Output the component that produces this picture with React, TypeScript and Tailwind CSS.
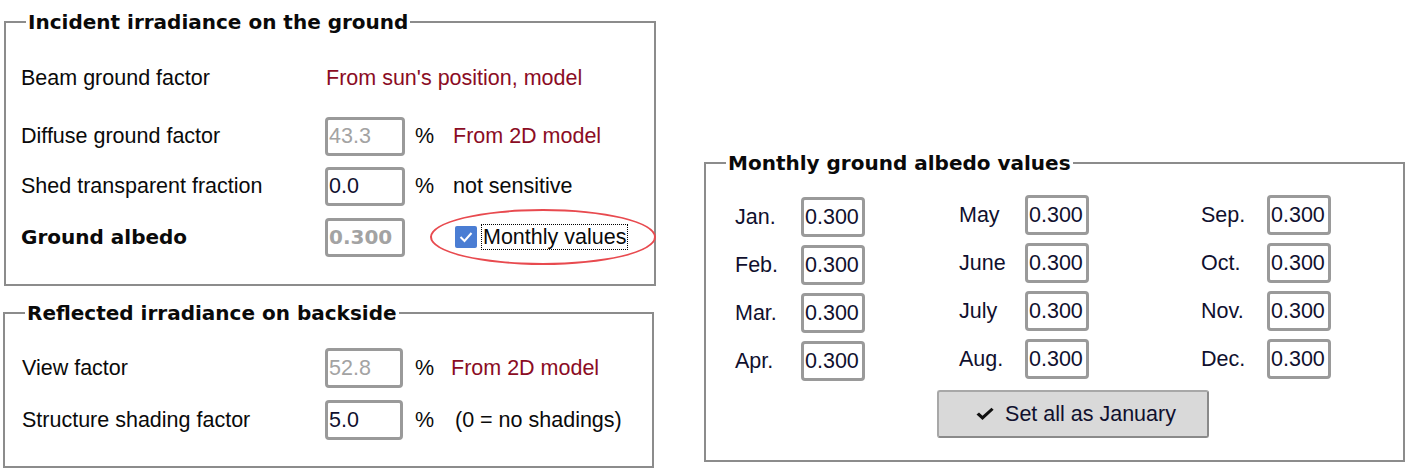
import React from "react"

const sans = "font-['Liberation_Sans',Arial,sans-serif] text-[21.5px] leading-[24px]"
const bold = "font-['DejaVu_Sans',Verdana,sans-serif] font-bold text-[20px] leading-[24px]"

function Legend({ children }: { children: React.ReactNode }) {
  return <legend className={`ml-[20px] px-[2px] text-[#0a0a0a] ${bold}`}>{children}</legend>
}

function Box({
  value,
  muted,
  strong,
  width = "w-[80px]",
  height = "h-[39px]",
}: {
  value: string
  muted?: boolean
  strong?: boolean
  width?: string
  height?: string
}) {
  return (
    <div
      className={`flex ${width} ${height} shrink-0 items-center rounded-[4px] border-[3px] border-[#9a9a9a] bg-white pl-[1px] ${
        strong ? bold : sans
      } ${muted ? "text-[#a3a3a3]" : "text-[#10102e]"}`}
    >
      {value}
    </div>
  )
}

function Check() {
  return (
    <svg width="18" height="14" viewBox="0 0 18 14" className="shrink-0">
      <path d="M0.5 7.5 L3 5.5 L6.5 8.8 L15.5 0.8 L17.6 2.8 L6.5 13 Z" fill="#111" />
    </svg>
  )
}

const months = [
  { col: "ml-[29px] mt-[22px]", items: ["Jan.", "Feb.", "Mar.", "Apr."] },
  { col: "ml-[94px] mt-[20px]", items: ["May", "June", "July", "Aug."] },
  { col: "ml-[112px] mt-[20px]", items: ["Sep.", "Oct.", "Nov.", "Dec."] },
]

export default function App() {
  return (
    <div className={`flex h-[471px] w-[1425px] items-start bg-white text-[#0a0a0a] ${sans}`}>
      {/* left column */}
      <div className="flex w-[656px] flex-col">
        <fieldset className="ml-[4px] mt-[10px] h-[276px] w-[652px] border-2 border-[#8c8c8c]">
          <Legend>Incident irradiance on the ground</Legend>
          <div className="mt-[24px] flex flex-col">
            <div className="flex h-[40px] items-center">
              <div className="w-[319px] pl-[15px]">Beam ground factor</div>
              <div className="pl-[1px] text-[#8b0c24]">From sun's position, model</div>
            </div>
            <div className="mt-[18px] flex h-[40px] items-center">
              <div className="w-[319px] pl-[15px]">Diffuse ground factor</div>
              <Box value="43.3" muted />
              <div className="ml-[10px] w-[38px]">%</div>
              <div className="text-[#8b0c24]">From 2D model</div>
            </div>
            <div className="mt-[10px] flex h-[40px] items-center">
              <div className="w-[319px] pl-[15px]">Shed transparent fraction</div>
              <Box value="0.0" />
              <div className="ml-[10px] w-[38px]">%</div>
              <div>not sensitive</div>
            </div>
            <div className="mt-[11px] flex h-[40px] items-center">
              <div className={`w-[319px] pl-[15px] ${bold}`}>Ground albedo</div>
              <Box value="0.300" muted strong />
              <div className="relative ml-[50px] flex items-center gap-[4px]">
                <div className="flex h-[22px] w-[22px] items-center justify-center rounded-[2px] bg-[#4a7dd3]">
                  <svg width="16" height="16" viewBox="0 0 16 16">
                    <path d="M2.5 8 L6.5 12 L13.5 4" stroke="#fff" strokeWidth="2" fill="none" />
                  </svg>
                </div>
                <div className="border border-dotted border-black px-[1px] leading-[24px]">Monthly values</div>
                <div className="pointer-events-none absolute left-[-25px] top-[-15px] h-[56px] w-[226px] rounded-[50%] border-[2.5px] border-[#e84a4f]" />
              </div>
            </div>
          </div>
        </fieldset>

        <fieldset className="ml-[3px] mt-[15px] h-[167px] w-[651px] border-2 border-[#8c8c8c]">
          <Legend>Reflected irradiance on backside</Legend>
          <div className="mt-[23px] flex flex-col">
            <div className="flex h-[40px] items-center">
              <div className="w-[320px] pl-[17px]">View factor</div>
              <Box value="52.8" muted width="w-[78px]" height="h-[40px]" />
              <div className="ml-[12px] w-[36px]">%</div>
              <div className="text-[#8b0c24]">From 2D model</div>
            </div>
            <div className="mt-[12px] flex h-[40px] items-center">
              <div className="w-[320px] pl-[17px]">Structure shading factor</div>
              <Box value="5.0" width="w-[78px]" height="h-[40px]" />
              <div className="ml-[12px] w-[40px]">%</div>
              <div>(0 = no shadings)</div>
            </div>
          </div>
        </fieldset>
      </div>

      {/* right column */}
      <fieldset className="ml-[48px] mt-[151px] h-[311px] w-[701px] border-2 border-[#8c8c8c]">
        <Legend>Monthly ground albedo values</Legend>
        <div className="flex items-start">
          {months.map((m) => (
            <div key={m.items[0]} className={`flex flex-col gap-[8px] ${m.col}`}>
              {m.items.map((label) => (
                <div key={label} className="flex h-[40px] items-center">
                  <div className="w-[66px] text-[#10102e]">{label}</div>
                  <Box value="0.300" width="w-[64px]" height="h-[40px]" />
                </div>
              ))}
            </div>
          ))}
        </div>
        <button className="ml-[231px] mt-[9px] flex h-[48px] w-[272px] items-center justify-center gap-[11px] rounded-[3px] border-2 border-[#a8a8a8] border-b-[#8a8a8a] border-r-[#8a8a8a] bg-[#d9d9d9] pl-[6px] text-[#10102e]">
          <Check />
          <span>Set all as January</span>
        </button>
      </fieldset>
    </div>
  )
}
